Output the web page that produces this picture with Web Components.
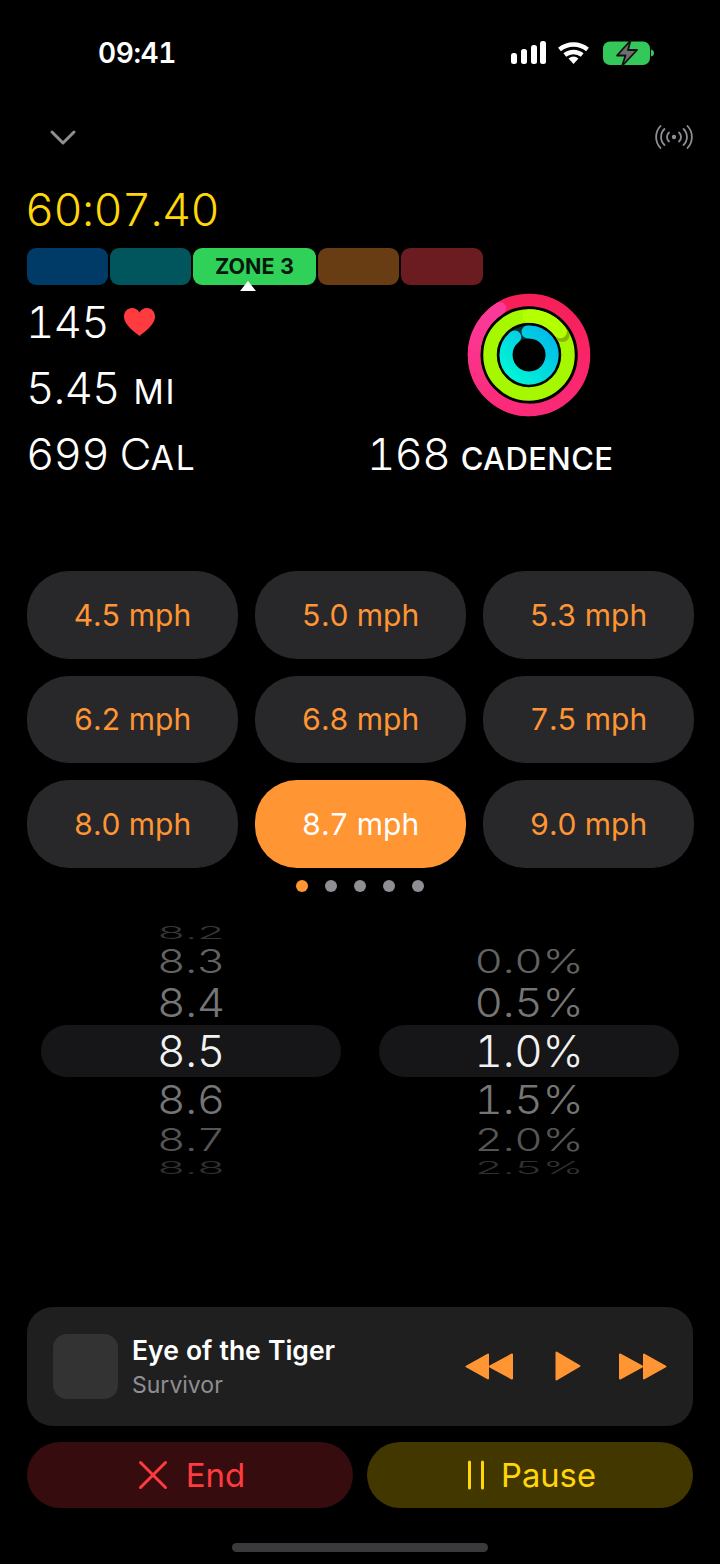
<!DOCTYPE html>
<html>
<head>
<meta charset="utf-8">
<title>Workout</title>
<style>
    html, body {
        margin: 0;
        padding: 0;
        background: #000;
        color: #fff;
        font-family: Inter, "Noto Sans", sans-serif;
        font-variant-numeric: tabular-nums;
    }
    body {
        width: 720px;
        height: 1564px;
        overflow: hidden;
    }
</style>
</head>
<body>
<status-bar time="09:41"></status-bar>
<workout-nav></workout-nav>
<workout-timer>60:07.40</workout-timer>
<zone-bar></zone-bar>
<workout-stats>
    <span slot="heart">145</span>
    <span slot="distance">5.45 <small class="mi">MI</small></span>
    <span slot="calories">699 C<small>AL</small></span>
    <span slot="cadence">168 <small>CADENCE</small></span>
</workout-stats>
<speed-grid>
    <speed-button>4.5 mph</speed-button>
    <speed-button>5.0 mph</speed-button>
    <speed-button>5.3 mph</speed-button>
    <speed-button>6.2 mph</speed-button>
    <speed-button>6.8 mph</speed-button>
    <speed-button>7.5 mph</speed-button>
    <speed-button>8.0 mph</speed-button>
    <speed-button active>8.7 mph</speed-button>
    <speed-button>9.0 mph</speed-button>
</speed-grid>
<page-dots count="5"></page-dots>
<picker-pair>
    <value-picker values="8.2,8.3,8.4,8.5,8.6,8.7,8.8"></value-picker>
    <value-picker values=",0.0%,0.5%,1.0%,1.5%,2.0%,2.5%"></value-picker>
</picker-pair>
<now-playing>
    <span slot="title">Eye of the Tiger</span>
    <span slot="artist">Survivor</span>
</now-playing>
<action-row>
    <action-button kind="end">End</action-button>
    <action-button kind="pause">Pause</action-button>
</action-row>
<home-bar></home-bar>

<script>
class StatusBar extends HTMLElement {
    constructor() {
        super();
        const root = this.attachShadow({mode: "open"});
        root.innerHTML = `
            <style>
                :host {
                    display: flex;
                    height: 120px;
                    box-sizing: border-box;
                    padding: 35px 66px 0 98px;
                    justify-content: space-between;
                    align-items: flex-start;
                }
                .time {
                    font-size: 28px;
                    font-weight: 600;
                    line-height: 36px;
                    letter-spacing: -0.4px;
                }
                svg { display: block; margin-top: 4px; }
            </style>
            <div class="time">${this.getAttribute("time")}</div>
            <svg width="144" height="28" viewBox="0 0 144 28">
                <g fill="#fff">
                    <rect x="1" y="14" width="6" height="11" rx="2.5"/>
                    <rect x="11" y="10" width="6" height="15" rx="2.5"/>
                    <rect x="21" y="6" width="6" height="19" rx="2.5"/>
                    <rect x="30" y="2" width="6" height="23" rx="2.5"/>
                </g>
                <g fill="none" stroke="#fff" stroke-width="4.4">
                    <path d="M49.5 10.5a22 22 0 0 1 28 0"/>
                    <path d="M54.8 16a14 14 0 0 1 17.4 0"/>
                </g>
                <path d="M58.5 19.5a8 8 0 0 1 10 0L63.5 25z" fill="#fff"/>
                <rect x="93" y="2.5" width="47" height="23.5" rx="7" fill="#34c759"/>
                <path d="M141 10.5c2 .4 3 1.800 3 3.500s-1 3.200-3 3.600z" fill="#34c759"/>
                <path d="M120.500 1.500 107 16.500h8.500L112 27l15-16h-9z" fill="#6e6e70" stroke="#111" stroke-width="1.800" stroke-linejoin="round"/>
            </svg>
        `;
    }
}

class WorkoutNav extends HTMLElement {
    constructor() {
        super();
        const root = this.attachShadow({mode: "open"});
        root.innerHTML = `
            <style>
                :host {
                    display: flex;
                    height: 34px;
                    padding: 0 27px 0 49px;
                    justify-content: space-between;
                    align-items: center;
                }
            </style>
            <svg width="28" height="18" viewBox="0 0 28 18">
                <path d="M3 4l11 11L25 4" fill="none" stroke="#8e8e93" stroke-width="3" stroke-linecap="round" stroke-linejoin="round"/>
            </svg>
            <svg width="38" height="28" viewBox="0 0 38 28" fill="none" stroke="#8e8e93" stroke-width="1.800" stroke-linecap="round">
                <circle cx="19" cy="14" r="2.200" fill="#8e8e93" stroke="none"/>
                <path d="M14 9.500a6 6 0 0 0 0 9M24 9.500a6 6 0 0 1 0 9"/>
                <path d="M9.500 6a11 11 0 0 0 0 16M28.500 6a11 11 0 0 1 0 16"/>
                <path d="M5.500 3a16 16 0 0 0 0 22M32.500 3a16 16 0 0 1 0 22"/>
            </svg>
        `;
    }
}

class WorkoutTimer extends HTMLElement {
    constructor() {
        super();
        const root = this.attachShadow({mode: "open"});
        root.innerHTML = `
            <style>
                :host {
                    display: block;
                    padding: 28px 25px 0;
                    height: 56px;
                    color: #ffd60a;
                    font-size: 45px;
                    font-weight: 300;
                    line-height: 56px;
                    letter-spacing: -0.6px;
                }
            </style>
            <slot></slot>
        `;
    }
}

class ZoneBar extends HTMLElement {
    constructor() {
        super();
        const root = this.attachShadow({mode: "open"});
        root.innerHTML = `
            <style>
                :host {
                    display: flex;
                    gap: 2px;
                    height: 37px;
                    margin-top: 10px;
                    padding-left: 27px;
                }
                div {
                    width: 81px;
                    border-radius: 9px;
                }
                .on {
                    position: relative;
                    width: 123px;
                    background: #30d158;
                    color: #06180b;
                    font-size: 21.500px;
                    font-weight: 700;
                    line-height: 37px;
                    text-align: center;
                }
                .on::after {
                    content: "";
                    position: absolute;
                    left: 47px;
                    top: 33px;
                    border-left: 8px solid transparent;
                    border-right: 8px solid transparent;
                    border-bottom: 10px solid #fff;
                }
            </style>
            <div style="background:#003a66"></div>
            <div style="background:#00565c"></div>
            <div class="on">ZONE 3</div>
            <div style="background:#693d14"></div>
            <div style="width:82px;background:#6b1c20"></div>
        `;
    }
}

class WorkoutStats extends HTMLElement {
    constructor() {
        super();
        const root = this.attachShadow({mode: "open"});
        root.innerHTML = `
            <style>
                :host {
                    display: grid;
                    grid-template-columns: 341px 1fr;
                    grid-template-rows: repeat(3, 66px);
                    padding: 4px 0 0 26px;
                    font-size: 44px;
                    font-weight: 300;
                    letter-spacing: -0.9px;
                }
                .cell {
                    display: flex;
                    align-items: center;
                    gap: 14px;
                }
                .rings {
                    grid-column: 2;
                    grid-row: 1 / span 2;
                    padding-left: 100px;
                    align-self: center;
                }
                ::slotted(*) { white-space: nowrap; }
            </style>
            <div class="cell" style="grid-column:1;grid-row:1">
                <slot name="heart"></slot>
                <svg width="33" height="30" viewBox="0 0 33 30">
                    <path d="M16.500 29C6 21 1 15.500 1 9.500 1 4.500 4.800 1 9 1c3.200 0 6 1.600 7.500 4.500C18 2.600 20.800 1 24 1c4.200 0 8 3.500 8 8.500 0 6-5 11.500-15.500 19.500z" fill="#ff3b40"/>
                </svg>
            </div>
            <div class="cell" style="grid-column:1;grid-row:2"><slot name="distance"></slot></div>
            <div class="cell" style="grid-column:1;grid-row:3"><slot name="calories"></slot></div>
            <div class="rings"><activity-rings></activity-rings></div>
            <div class="cell" style="grid-column:2;grid-row:3"><slot name="cadence"></slot></div>
        `;
    }
}

class ActivityRings extends HTMLElement {
    constructor() {
        super();
        const root = this.attachShadow({mode: "open"});
        root.innerHTML = `
            <style>
                :host { display: block; width: 124px; height: 124px; }
                svg { display: block; }
            </style>
            <svg width="124" height="124" viewBox="-62 -62 124 124" fill="none">
                <defs>
                    <linearGradient id="red" gradientUnits="userSpaceOnUse" x1="0" y1="-55" x2="0" y2="55">
                        <stop offset="0" stop-color="#f71f58"/>
                        <stop offset="1" stop-color="#fb2a78"/>
                    </linearGradient>
                    <linearGradient id="pink" gradientUnits="userSpaceOnUse" x1="0" y1="55" x2="0" y2="-50">
                        <stop offset="0" stop-color="#fb2a78"/>
                        <stop offset="1" stop-color="#fb3a9c"/>
                    </linearGradient>
                    <linearGradient id="cyan" gradientUnits="userSpaceOnUse" x1="20" y1="-20" x2="-20" y2="20">
                        <stop offset="0" stop-color="#00bde8"/>
                        <stop offset="1" stop-color="#00f5d6"/>
                    </linearGradient>
                </defs>
                <circle r="55" stroke="url(#red)" stroke-width="12.500"/>
                <path d="M0 55A55 55 0 0 1 -29.100 -46.600" stroke="url(#pink)" stroke-width="12.500" stroke-linecap="round"/>
                <circle r="39" stroke="#a6f800" stroke-width="13.500"/>
                <circle cx="33.500" cy="-20" r="7" fill="#86b800"/>
                <path d="M0 -39A39 39 0 0 1 31.200 -23.400" stroke="#b4ff00" stroke-width="13.500" stroke-linecap="round"/>
                <circle r="23" stroke="#06303a" stroke-width="13"/>
                <path d="M-1 -23A23 23 0 1 1 -14.200 -18.100" stroke="url(#cyan)" stroke-width="13" stroke-linecap="round"/>
            </svg>
        `;
    }
}

class SpeedGrid extends HTMLElement {
    constructor() {
        super();
        const root = this.attachShadow({mode: "open"});
        root.innerHTML = `
            <style>
                :host {
                    display: grid;
                    grid-template-columns: repeat(3, 1fr);
                    grid-auto-rows: 87.5px;
                    gap: 17px;
                    margin-top: 84px;
                    padding: 0 26px 0 27px;
                }
            </style>
            <slot></slot>
        `;
    }
}

class SpeedButton extends HTMLElement {
    constructor() {
        super();
        const root = this.attachShadow({mode: "open"});
        const on = this.hasAttribute("active");
        root.innerHTML = `
            <style>
                :host {
                    display: flex;
                    align-items: center;
                    justify-content: center;
                    border-radius: 42px;
                    background: ${on ? "#ff9533" : "#28282a"};
                    color: ${on ? "#fff" : "#ff9533"};
                    font-size: 30px;
                    font-weight: 400;
                }
            </style>
            <slot></slot>
        `;
    }
}

class PageDots extends HTMLElement {
    constructor() {
        super();
        const root = this.attachShadow({mode: "open"});
        let dots = "";
        for (let i = 0; i < Number(this.getAttribute("count")); i++) {
            dots += `<i class="${i === 0 ? "on" : ""}"></i>`;
        }
        root.innerHTML = `
            <style>
                :host {
                    display: flex;
                    justify-content: center;
                    gap: 16.500px;
                    margin-top: 12px;
                }
                i {
                    width: 12.500px;
                    height: 12.500px;
                    border-radius: 50%;
                    background: #8e8e93;
                }
                i.on { background: #ff9533; }
            </style>
            ${dots}
        `;
    }
}

class PickerPair extends HTMLElement {
    constructor() {
        super();
        const root = this.attachShadow({mode: "open"});
        root.innerHTML = `
            <style>
                :host {
                    display: flex;
                    gap: 38px;
                    margin-top: 31.500px;
                    padding-left: 41px;
                }
            </style>
            <slot></slot>
        `;
    }
}

class ValuePicker extends HTMLElement {
    constructor() {
        super();
        const root = this.attachShadow({mode: "open"});
        // height, squash and grey of each wheel row, top to bottom
        const rows = [
            [19, 0.4, "#363636"],
            [36, 0.73, "#626262"],
            [46, 0.91, "#757575"],
            [52, 1, "#f2f2f2"],
            [44, 0.91, "#757575"],
            [38, 0.7, "#555555"],
            [19, 0.4, "#303030"]
        ];
        const values = this.getAttribute("values").split(",");
        const html = values.map((v, i) => `
            <div class="row" style="height:${rows[i][0]}px;color:${rows[i][2]}">
                <span style="transform:scaleY(${rows[i][1]})">${v}</span>
            </div>`).join("");
        root.innerHTML = `
            <style>
                :host {
                    display: grid;
                    width: 300px;
                    height: 256px;
                    font-size: 44px;
                    font-weight: 300;
                    letter-spacing: -0.3px;
                }
                .pill, .list { grid-area: 1 / 1; }
                .pill {
                    height: 52px;
                    margin-top: 101px;
                    border-radius: 26px;
                    background: #161618;
                }
                .row {
                    display: flex;
                    align-items: center;
                    justify-content: center;
                }
                span { display: block; line-height: 1; }
            </style>
            <div class="pill"></div>
            <div class="list">${html}</div>
        `;
    }
}

class NowPlaying extends HTMLElement {
    constructor() {
        super();
        const root = this.attachShadow({mode: "open"});
        root.innerHTML = `
            <style>
                :host {
                    display: flex;
                    align-items: center;
                    box-sizing: border-box;
                    width: 666px;
                    height: 119px;
                    margin: 127px 0 0 27px;
                    padding: 0 26px;
                    border-radius: 26px;
                    background: #1f1f1f;
                }
                .art {
                    width: 65px;
                    height: 65px;
                    border-radius: 14px;
                    background: #333;
                    margin-right: 14px;
                }
                .text { flex: 1; padding-top: 4px; }
                .title {
                    font-size: 26.500px;
                    font-weight: 600;
                    line-height: 33px;
                }
                .artist {
                    color: #8e8e93;
                    font-size: 23px;
                    line-height: 36px;
                }
                .controls {
                    display: flex;
                    align-items: center;
                }
                svg { display: block; }
            </style>
            <div class="art"></div>
            <div class="text">
                <div class="title"><slot name="title"></slot></div>
                <div class="artist"><slot name="artist"></slot></div>
            </div>
            <div class="controls">
                <svg width="48" height="27" viewBox="0 0 48 27" fill="#ff9533" stroke="#ff9533" stroke-width="2" stroke-linejoin="round">
                    <path d="M23 1.500V25.500L1.500 13.500zM47 1.500V25.500L25 13.500z"/>
                </svg>
                <svg style="margin:0 38px 0 42px" width="26" height="30" viewBox="0 0 26 30" fill="#ff9533" stroke="#ff9533" stroke-width="2" stroke-linejoin="round">
                    <path d="M1.500 1.500V28.500L24.500 15z"/>
                </svg>
                <svg width="48" height="27" viewBox="0 0 48 27" fill="#ff9533" stroke="#ff9533" stroke-width="2" stroke-linejoin="round">
                    <path d="M1 1.500V25.500L23 13.500zM25 1.500V25.500L46.500 13.500z"/>
                </svg>
            </div>
        `;
    }
}

class ActionRow extends HTMLElement {
    constructor() {
        super();
        const root = this.attachShadow({mode: "open"});
        root.innerHTML = `
            <style>
                :host {
                    display: flex;
                    gap: 14px;
                    margin-top: 16px;
                    padding-left: 27px;
                }
            </style>
            <slot></slot>
        `;
    }
}

class ActionButton extends HTMLElement {
    constructor() {
        super();
        const root = this.attachShadow({mode: "open"});
        const end = this.getAttribute("kind") === "end";
        const icon = end
            ? `<svg width="30" height="30" viewBox="0 0 30 30"><path d="M2.500 2.500l25 25M27.500 2.500l-25 25" stroke="#ff3b40" stroke-width="3" stroke-linecap="round"/></svg>`
            : `<svg width="16" height="30" viewBox="0 0 16 30"><path d="M1.500 2v26M14.500 2v26" stroke="#ffd60a" stroke-width="3" stroke-linecap="round"/></svg>`;
        root.innerHTML = `
            <style>
                :host {
                    display: flex;
                    align-items: center;
                    justify-content: center;
                    gap: ${end ? 18 : 17}px;
                    box-sizing: border-box;
                    width: 326px;
                    height: 66px;
                    padding-left: ${end ? 3 : 4}px;
                    border-radius: 33px;
                    background: ${end ? "#360c0e" : "#433700"};
                    color: ${end ? "#ff3b40" : "#ffd60a"};
                    font-size: ${end ? 33 : 32.7}px;
                }
                svg { display: block; }
            </style>
            ${icon}
            <slot></slot>
        `;
    }
}

class HomeBar extends HTMLElement {
    constructor() {
        super();
        const root = this.attachShadow({mode: "open"});
        root.innerHTML = `
            <style>
                :host {
                    display: block;
                    width: 256px;
                    height: 9px;
                    margin: 35px auto 0;
                    border-radius: 5px;
                    background: #3a3a3c;
                }
            </style>
        `;
    }
}

customElements.define("status-bar", StatusBar);
customElements.define("workout-nav", WorkoutNav);
customElements.define("workout-timer", WorkoutTimer);
customElements.define("zone-bar", ZoneBar);
customElements.define("workout-stats", WorkoutStats);
customElements.define("activity-rings", ActivityRings);
customElements.define("speed-grid", SpeedGrid);
customElements.define("speed-button", SpeedButton);
customElements.define("page-dots", PageDots);
customElements.define("picker-pair", PickerPair);
customElements.define("value-picker", ValuePicker);
customElements.define("now-playing", NowPlaying);
customElements.define("action-row", ActionRow);
customElements.define("action-button", ActionButton);
customElements.define("home-bar", HomeBar);
</script>
<style>
    small {
        font-size: 33.500px;
        font-weight: 400;
        letter-spacing: 1.800px;
    }
    small.mi { margin-left: 3px; }
    [slot="cadence"] small { font-weight: 500; font-size: 31px; letter-spacing: 0.4px; }
</style>
</body>
</html>
